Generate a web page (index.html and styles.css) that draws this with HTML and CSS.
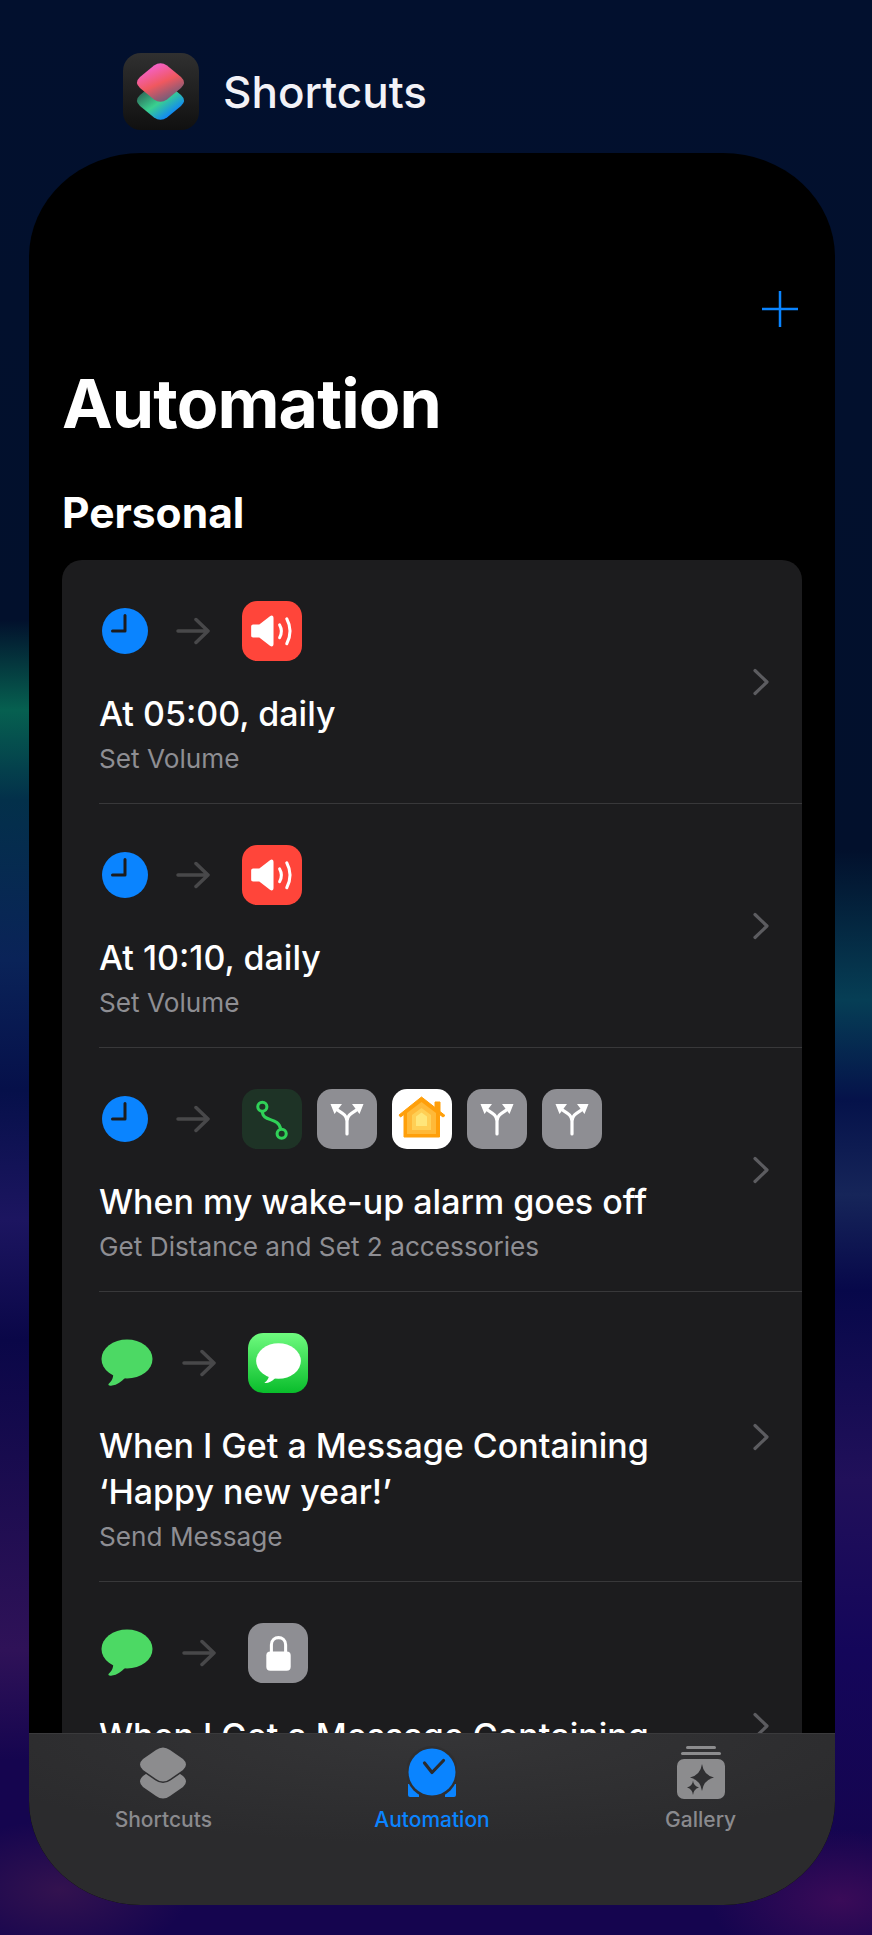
FILE: index.html
```html
<!DOCTYPE html>
<html lang="en">
<head>
  <meta charset="UTF-8" />
  <meta name="viewport" content="width=device-width, initial-scale=1.0" />
  <title>Shortcuts - Automation</title>
  <link rel="stylesheet" href="styles.css">
</head>
<body>

  <!-- icons used more than once -->
  <svg class="sprite" aria-hidden="true">
    <defs>
      <linearGradient id="msgGreen" x1="0" y1="0" x2="0" y2="1">
        <stop offset="0" stop-color="#6ffb7f" />
        <stop offset="1" stop-color="#09bd2b" />
      </linearGradient>
      <symbol id="clock" viewBox="0 0 46 46">
        <circle cx="23" cy="23" r="23" fill="#0a84ff" />
        <path d="M23 7.500V23H10.500" fill="none" stroke="#1c1c1e" stroke-width="3" stroke-linecap="round" stroke-linejoin="round" />
      </symbol>
      <symbol id="arrow" viewBox="0 0 34 28">
        <path d="M2 14H32M20 2.500L32 14L20 25.500" fill="none" stroke="#48484a" stroke-width="3.500" stroke-linecap="round" stroke-linejoin="round" />
      </symbol>
      <symbol id="bubble" viewBox="0 0 52 47">
        <ellipse cx="26" cy="20" rx="25.500" ry="19.500" fill="#4cd964" />
        <path d="M12 32C13 38 11 42 7.500 45C7 46.500 8.500 47 11 46.500C16 46 20 43 24 39Z" fill="#4cd964" />
      </symbol>
      <symbol id="chevron" viewBox="0 0 18 28">
        <path d="M3 2.500L15 14L3 25.500" fill="none" stroke="#5c5c60" stroke-width="3.200" stroke-linecap="round" stroke-linejoin="round" />
      </symbol>
      <symbol id="speaker" viewBox="0 0 59 59">
        <rect width="59" height="59" rx="15" fill="#ff453a" />
        <path d="M11 23H17L27.500 15C29.500 13.500 31 14.500 31 17V42C31 44.500 29.500 45.500 27.500 44L17 36H11C9.500 36 9 35 9 34V25C9 24 9.500 23 11 23Z" fill="#fff" />
        <path d="M37 23.500Q40.500 29.500 37 36M44 17.500Q50.500 29.500 44 42" fill="none" stroke="#fff" stroke-width="3" stroke-linecap="round" />
      </symbol>
      <symbol id="branch" viewBox="0 0 60 60">
        <rect width="60" height="60" rx="15" fill="#8e8e93" />
        <path d="M30 45V32C30 26 25 24 19 20M30 32C30 26 35 24 41 20" fill="none" stroke="#fff" stroke-width="3.200" stroke-linecap="round" />
        <path d="M13.500 15H25L17.500 25ZM46.500 15H35L42.500 25Z" fill="#fff" />
      </symbol>
    </defs>
  </svg>

  <header class="app-label">
    <svg class="app-icon" viewBox="0 0 76 77">
      <defs>
        <linearGradient id="logoBg" x1="0" y1="0" x2="0" y2="1">
          <stop offset="0" stop-color="#303030" />
          <stop offset="1" stop-color="#101010" />
        </linearGradient>
        <linearGradient id="logoTop" x1="0.25" y1="0" x2="0.8" y2="1">
          <stop offset="0" stop-color="#f563dc" />
          <stop offset="0.5" stop-color="#f0585f" />
          <stop offset="0.75" stop-color="#a05a70" />
          <stop offset="1" stop-color="#55607f" />
        </linearGradient>
        <linearGradient id="logoBottom" x1="0.1" y1="0.2" x2="0.7" y2="0.9">
          <stop offset="0" stop-color="#2c5c52" />
          <stop offset="0.55" stop-color="#3ad08f" />
          <stop offset="1" stop-color="#0f86f7" />
        </linearGradient>
      </defs>
      <rect width="76" height="77" rx="18" fill="url(#logoBg)" />
      <path d="M31 30.500Q37.500 26 44 30.500L58 42Q64 47.500 58 53L44 64.500Q37.500 69 31 64.500L17 53Q11 47.500 17 42Z" fill="url(#logoBottom)" />
      <path d="M31 12.500Q37.500 8 44 12.500L58 24Q64 29.500 58 35L44 46.500Q37.500 51 31 46.500L17 35Q11 29.500 17 24Z" fill="url(#logoTop)" />
    </svg>
    <span class="app-name">Shortcuts</span>
  </header>

  <div class="card">
    <main class="scroller">
      <div class="nav-row">
        <svg class="plus" viewBox="0 0 36 36">
          <path d="M18 0V36M0 18H36" stroke="#0a84ff" stroke-width="2.500" stroke-linecap="round" />
        </svg>
      </div>

      <h1 class="title">Automation</h1>
      <h2 class="section">Personal</h2>

      <ul class="list">
        <li class="row">
          <div class="row-main">
            <div class="flow">
              <svg class="trigger"><use href="#clock" /></svg>
              <svg class="arrow"><use href="#arrow" /></svg>
              <svg class="tile"><use href="#speaker" /></svg>
            </div>
            <div class="row-title">At 05:00, daily</div>
            <div class="row-sub">Set Volume</div>
          </div>
          <svg class="chevron"><use href="#chevron" /></svg>
        </li>

        <li class="row">
          <div class="row-main">
            <div class="flow">
              <svg class="trigger"><use href="#clock" /></svg>
              <svg class="arrow"><use href="#arrow" /></svg>
              <svg class="tile"><use href="#speaker" /></svg>
            </div>
            <div class="row-title">At 10:10, daily</div>
            <div class="row-sub">Set Volume</div>
          </div>
          <svg class="chevron"><use href="#chevron" /></svg>
        </li>

        <li class="row">
          <div class="row-main">
            <div class="flow">
              <svg class="trigger"><use href="#clock" /></svg>
              <svg class="arrow"><use href="#arrow" /></svg>
              <svg class="tile" viewBox="0 0 59 59">
                <rect width="59" height="59" rx="15" fill="#1e3326" />
                <circle cx="20" cy="17.500" r="4.500" fill="none" stroke="#30d158" stroke-width="3" />
                <circle cx="39" cy="44" r="4.500" fill="none" stroke="#30d158" stroke-width="3" />
                <path d="M20 22C20 33 36 27 38 39.500" fill="none" stroke="#30d158" stroke-width="3" />
              </svg>
              <svg class="tile"><use href="#branch" /></svg>
              <svg class="tile" viewBox="0 0 60 60">
                <rect width="60" height="60" rx="15" fill="#fff" />
                <path d="M7 26L29.500 8L43 18.500V13H48V22.500L53 26.500L51 28L47.500 25.500V48H12V25.500L8.500 28Z" fill="#ff9f0a" stroke="#ff9f0a" stroke-linejoin="round" />
                <path d="M15 24L29.500 13L44 24V45H15Z" fill="#ffb938" />
                <path d="M20 26L29.500 19L39 26V41H20Z" fill="#ffcf55" />
                <path d="M24 27.500L29.500 23.500L35 27.500V37H24Z" fill="#ffe67a" />
              </svg>
              <svg class="tile"><use href="#branch" /></svg>
              <svg class="tile"><use href="#branch" /></svg>
            </div>
            <div class="row-title">When my wake-up alarm goes off</div>
            <div class="row-sub">Get Distance and Set 2 accessories</div>
          </div>
          <svg class="chevron"><use href="#chevron" /></svg>
        </li>

        <li class="row">
          <div class="row-main">
            <div class="flow flow-msg">
              <svg class="trigger-msg"><use href="#bubble" /></svg>
              <svg class="arrow"><use href="#arrow" /></svg>
              <svg class="tile" viewBox="0 0 59 59">
                <rect width="59" height="59" rx="15" fill="url(#msgGreen)" />
                <ellipse cx="30" cy="27.500" rx="22" ry="17.500" fill="#fff" />
                <path d="M21 40C21 44 19 47 16 49C19 49.500 23 48.500 27 44Z" fill="#fff" />
              </svg>
            </div>
            <div class="row-title">When I Get a Message Containing<br>‘Happy new year!’</div>
            <div class="row-sub">Send Message</div>
          </div>
          <svg class="chevron"><use href="#chevron" /></svg>
        </li>

        <li class="row row-tall">
          <div class="row-main">
            <div class="flow flow-msg">
              <svg class="trigger-msg"><use href="#bubble" /></svg>
              <svg class="arrow"><use href="#arrow" /></svg>
              <svg class="tile" viewBox="0 0 59 59">
                <rect width="59" height="59" rx="15" fill="#8e8e93" />
                <path d="M23 29V21.500C23 12 37 12 37 21.500V29" fill="none" stroke="#fff" stroke-width="3" />
                <rect x="18" y="28" width="24" height="19" rx="4" fill="#fff" />
              </svg>
            </div>
            <div class="row-title">When I Get a Message Containing</div>
          </div>
          <svg class="chevron"><use href="#chevron" /></svg>
        </li>
      </ul>
    </main>

    <nav class="tabbar">
      <a class="tab">
        <svg class="tab-icon" viewBox="0 0 50 54">
          <path d="M18 21Q25 16 32 21L45 30Q51 35.500 45 41L32 50Q25 55 18 50L5 41Q-1 35.500 5 30Z" fill="#8c8c8e" />
          <path d="M18 4Q25 -1 32 4L45 13Q51 18.500 45 24L32 33Q25 38 18 33L5 24Q-1 18.500 5 13Z" fill="#8c8c8e" stroke="#2f2f31" stroke-width="3" paint-order="stroke" />
        </svg>
        <span class="tab-label">Shortcuts</span>
      </a>
      <a class="tab tab-active">
        <svg class="tab-icon" viewBox="0 0 50 54">
          <path d="M1 38H12V51H3Q1 51 1 49ZM49 38H38V51H47Q49 51 49 49Z" fill="#0a84ff" />
          <circle cx="25" cy="26" r="26" fill="#2f2f31" />
          <circle cx="25" cy="26" r="23.500" fill="#0a84ff" />
          <path d="M17.500 17L25 26.500L36.500 14.500" fill="none" stroke="#2b2b2d" stroke-width="3.200" stroke-linecap="round" stroke-linejoin="round" />
        </svg>
        <span class="tab-label">Automation</span>
      </a>
      <a class="tab">
        <svg class="tab-icon" viewBox="0 0 50 54">
          <rect x="10" y="0" width="30" height="3" rx="1.500" fill="#8c8c8e" />
          <rect x="5" y="6" width="40" height="3" rx="1.500" fill="#8c8c8e" />
          <rect x="1" y="13" width="48" height="40" rx="7" fill="#8c8c8e" />
          <path d="M26 18Q27.500 29 38 31.500Q27.500 34 26 45Q24.500 34 14 31.500Q24.500 29 26 18Z" fill="#2f2f31" />
          <path d="M17 34.500Q17.500 40 23 41.500Q17.500 43 17 49Q16.500 43 11 41.500Q16.500 40 17 34.500Z" fill="#2f2f31" />
        </svg>
        <span class="tab-label">Gallery</span>
      </a>
    </nav>
  </div>

</body>
</html>
```

FILE: styles.css
```css
* {
  box-sizing: border-box;
}

html,
body {
  height: 1935px;
}

body {
  margin: 0;
  overflow: hidden;
  font-family: Inter, "Noto Sans", sans-serif;
  background-color: #02102e;
  background-image:
    radial-gradient(ellipse 130px 70px at 60px 1890px, #33124f, transparent),
    radial-gradient(ellipse 130px 70px at 840px 1900px, #3a0b58, transparent),
    linear-gradient(#02102e 0, #02102c 620px, #066050 710px, #03304a 800px, #0a2358 960px, #06104a 1090px, #1c1560 1220px, #0a0748 1340px, #2f1258 1650px, #15054f 1760px, #15054f 100%),
    linear-gradient(#02102e 0, #02102c 850px, #063e55 1000px, #05124a 1100px, #162559 1195px, #07084a 1290px, #21105a 1480px, #14065a 1650px, #15054f 1850px, #15054f 100%);
  background-size: 100% 100%, 100% 100%, 50% 100%, 50% 100%;
  background-position: 0 0, 0 0, left top, right top;
  background-repeat: no-repeat;
}

.sprite {
  position: absolute;
  width: 0;
  height: 0;
}

svg {
  display: block;
  flex: none;
}

.app-label {
  display: flex;
  align-items: center;
  gap: 24px;
  padding: 53px 0 0 123px;
  height: 130px;
  margin-bottom: 23px;
}

.app-icon {
  width: 76px;
  height: 77px;
}

.app-name {
  font-size: 44px;
  font-weight: 500;
  color: #f2f2f7;
}

.card {
  display: flex;
  flex-direction: column;
  width: 806px;
  height: 1752px;
  margin-left: 29px;
  background: #000;
  border-radius: 112px / 104px;
  overflow: hidden;
}

.scroller {
  flex: 1;
  min-height: 0;
  overflow: hidden;
  padding: 138px 33px 0;
}

.nav-row {
  display: flex;
  justify-content: flex-end;
  padding-right: 4px;
}

.plus {
  width: 36px;
  height: 36px;
}

.title {
  margin: 36px 0 45px;
  font-size: 68px;
  line-height: 80px;
  font-weight: 700;
  letter-spacing: -0.9px;
  color: #fff;
}

.section {
  margin: 0 0 22px;
  font-size: 42.5px;
  line-height: 50px;
  font-weight: 700;
  color: #fff;
}

.list {
  list-style: none;
  margin: 0;
  padding: 0;
  background: #1c1c1e;
  border-radius: 20px 20px 0 0;
}

.row {
  display: flex;
  align-items: center;
  justify-content: space-between;
  margin-left: 37px;
  padding: 41px 32px 28px 0;
  border-bottom: 1px solid #38383a;
}

.row-tall {
  min-height: 290px;
  border-bottom: none;
  align-items: flex-start;
}

.row-tall .chevron {
  margin: 89px 0 0;
}

.row-main {
  min-width: 0;
}

.flow {
  display: flex;
  align-items: center;
  gap: 15px;
  height: 59px;
  margin-bottom: 31px;
  padding-left: 3px;
}

.trigger {
  width: 46px;
  height: 46px;
  margin-right: 13px;
}

.arrow {
  width: 34px;
  height: 28px;
  margin-right: 17px;
}

.tile {
  width: 60px;
  height: 60px;
}

.trigger-msg {
  width: 52px;
  height: 47px;
  margin-right: 14px;
}

.flow-msg {
  padding-left: 2px;
}

.row-title {
  font-size: 34px;
  line-height: 46px;
  font-weight: 500;
  color: #fff;
  margin-bottom: 6px;
}

.row-sub {
  font-size: 26.2px;
  line-height: 32px;
  color: #8e8e93;
}

.chevron {
  width: 18px;
  height: 28px;
  margin-bottom: 13px;
}

.tabbar {
  display: grid;
  grid-template-columns: repeat(3, 1fr);
  height: 172px;
  flex: none;
  padding-top: 12px;
  border-top: 1px solid #3a3a3c;
  background: radial-gradient(ellipse 500px 110px at 50% 0, #353537, transparent), #2b2b2d;
}

.tab {
  display: flex;
  flex-direction: column;
  align-items: center;
  gap: 8px;
  color: #8a8a8e;
}

.tab-active {
  color: #0a84ff;
}

.tab-icon {
  width: 50px;
  height: 54px;
}

.tab-label {
  font-size: 21px;
  line-height: 24px;
  font-weight: 500;
}
```
